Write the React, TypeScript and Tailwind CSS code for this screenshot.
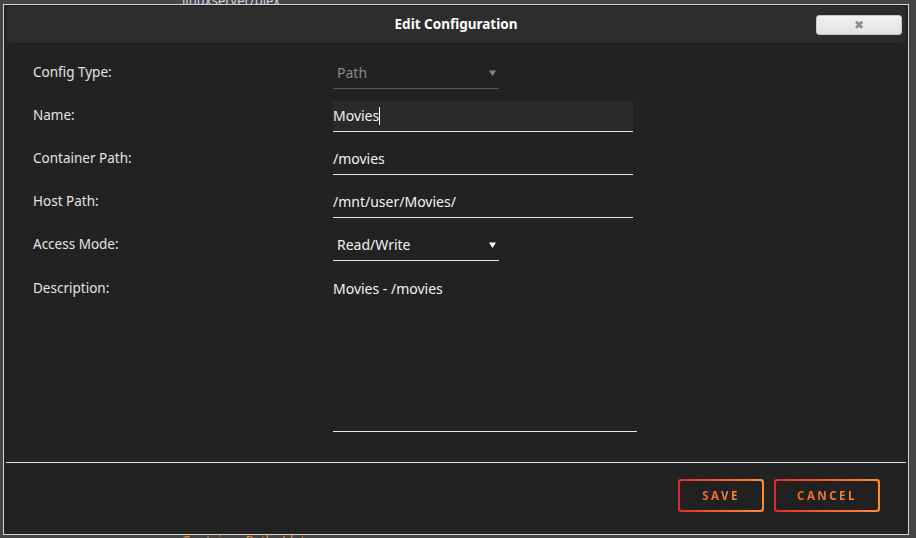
import React from 'react';

const font = { fontFamily: '"Noto Sans", "Open Sans", Arial, sans-serif' };

const Arrow: React.FC<{ className?: string }> = ({ className }) => (
  <svg width="7" height="6" viewBox="0 0 7 6" className={className}>
    <path d="M0 0.5 H7 L3.5 6 Z" fill="currentColor" />
  </svg>
);

const Row: React.FC<{ label: string; children: React.ReactNode }> = ({ label, children }) => (
  <div className="flex items-center mb-[12px]">
    <div className="w-[300px] text-[13.5px] text-[#e4e4e4] -mt-[2px]">{label}</div>
    {children}
  </div>
);

const OutlineButton: React.FC<{ label: string; width: string }> = ({ label, width }) => (
  <div className={`rounded-[3px] p-[2px] bg-gradient-to-r from-[#e22828] to-[#ff8c2f] ${width}`}>
    <div className="h-[29px] rounded-[2px] bg-[#212121] flex items-center justify-center">
      <span className="text-[11.5px] font-bold tracking-[2.5px] bg-gradient-to-r from-[#f0662c] to-[#ff8c2f] bg-clip-text text-transparent">
        {label}
      </span>
    </div>
  </div>
);

export default function App() {
  return (
    <div className="relative w-[916px] h-[538px] bg-[#454545] overflow-hidden" style={font}>
      {/* page content peeking out behind the dialog */}
      <div className="absolute left-[182px] -top-[9px] text-[13px] text-[#cfd6e6]">linuxserver/plex</div>
      <div className="absolute left-[182px] top-[531px] text-[13px] text-[#e8902a]">Container Path: /data</div>

      <div className="absolute left-[3px] top-[4px] w-[906px] h-[531px] border border-[#d4d4d4] bg-[#222222] flex flex-col">
        <div className="mx-[2px] mt-[1px] h-[37px] rounded-[4px] bg-[#2d2d2d] flex items-center relative">
          <div className="flex-1 text-center text-[13.5px] font-bold text-white">Edit Configuration</div>
          <button className="absolute right-[4px] top-[9px] w-[86px] h-[20px] rounded-[3px] bg-gradient-to-b from-[#f2f2f2] to-[#e2e2e2] border border-[#c8c8c8] flex items-center justify-center text-[#8a8a8a] text-[12px] leading-none">
            ✖
          </button>
        </div>

        <div className="pl-[29px] pt-[15px]">
          <Row label="Config Type:">
            <div className="w-[166px] h-[31px] border-b border-[#555] flex items-center justify-between pl-[4px] pr-[3px] text-[14px] text-[#8a8a8a]">
              <span className="-mt-[2px]">Path</span>
              <Arrow className="text-[#888]" />
            </div>
          </Row>
          <Row label="Name:">
            <div className="w-[300px] h-[31px] bg-[#2a2a2a] border-b border-[#e6e6e6] flex items-center text-[14px] text-[#f2f2f2]">
              <span className="-mt-[1px]">Movies</span>
              <span className="w-px h-[18px] bg-white -mt-[1px]" />
            </div>
          </Row>
          <Row label="Container Path:">
            <div className="w-[300px] h-[31px] border-b border-[#e6e6e6] flex items-center text-[14px] text-[#f2f2f2]">
              <span className="-mt-[1px]">/movies</span>
            </div>
          </Row>
          <Row label="Host Path:">
            <div className="w-[300px] h-[31px] border-b border-[#e6e6e6] flex items-center text-[14px] text-[#f2f2f2]">
              <span className="-mt-[1px]">/mnt/user/Movies/</span>
            </div>
          </Row>
          <Row label="Access Mode:">
            <div className="w-[166px] h-[31px] border-b border-[#e6e6e6] flex items-center justify-between pl-[4px] pr-[3px] text-[14px] text-[#f2f2f2]">
              <span className="-mt-[1px]">Read/Write</span>
              <Arrow className="text-white" />
            </div>
          </Row>
          <div className="flex items-start">
            <div className="w-[300px] text-[13.5px] text-[#e4e4e4] pt-[5px]">Description:</div>
            <div className="w-[304px] h-[159px] border-b border-[#e6e6e6] text-[14px] text-[#f2f2f2] pt-[5px]">
              Movies - /movies
            </div>
          </div>
        </div>

        <div className="mt-[30px] mx-[2px] border-t border-[#e6e6e6]" />

        <div className="flex justify-end gap-[10px] pr-[28px] pt-[16px]">
          <OutlineButton label="SAVE" width="w-[86px]" />
          <OutlineButton label="CANCEL" width="w-[106px]" />
        </div>
      </div>
    </div>
  );
}
